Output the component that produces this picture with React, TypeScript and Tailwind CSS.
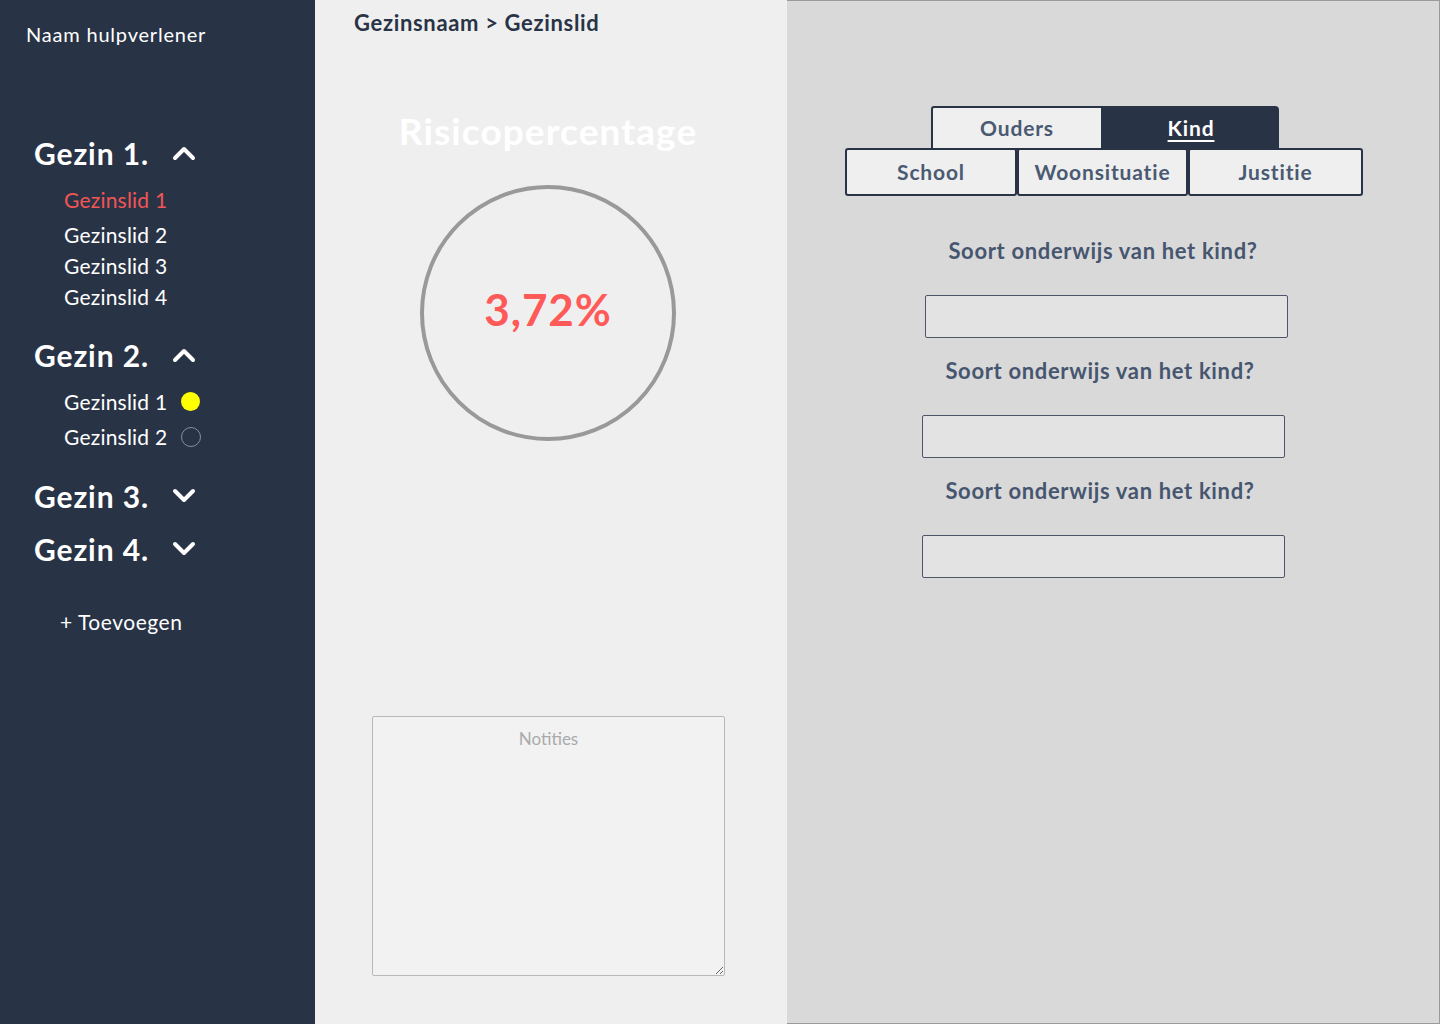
import React from "react";

const font = { fontFamily: "Lato, 'Open Sans', sans-serif" };

function Chevron({ up }: { up?: boolean }) {
  return (
    <svg width="24" height="16" viewBox="0 0 24 16">
      <path
        d={up ? "M3 13 L12 4 L21 13" : "M3 3 L12 12 L21 3"}
        fill="none"
        stroke="white"
        strokeWidth="4"
        strokeLinecap="round"
        strokeLinejoin="round"
      />
    </svg>
  );
}

type Member = { name: string; active?: boolean; dot?: "filled" | "empty" };

function Family({ title, open, members }: { title: string; open?: boolean; members?: Member[] }) {
  return (
    <div className="flex flex-col">
      <div className="flex items-center h-[36px]">
        <span className="w-[138px] text-[30px] font-bold text-white leading-[36px] tracking-[0.03em]">{title}</span>
        <Chevron up={open} />
      </div>
      {open && members && (
        <ul className="flex flex-col pl-[30px] mt-[13px]">
          {members.map((m, i) => (
            <li
              key={m.name}
              className={
                "flex items-center text-[21px] leading-[31px] tracking-[0.01em] " +
                (m.active ? "text-[#f25555]" : "text-white") +
                (i === 0 ? " mb-[4px]" : "")
              }
            >
              <span className={m.dot ? "w-[117px]" : ""}>{m.name}</span>
              {m.dot === "filled" && <span className="size-[19px] rounded-full bg-[#ffff00]" />}
              {m.dot === "empty" && <span className="size-[20px] rounded-full border border-[#8a8f99]" />}
            </li>
          ))}
        </ul>
      )}
    </div>
  );
}

function Sidebar() {
  return (
    <aside className="w-[315px] shrink-0 bg-[#293346] flex flex-col">
      <div className="pl-[26px] pt-[22px] text-[20px] leading-[24px] text-white tracking-[0.04em]">
        Naam hulpverlener
      </div>
      <div className="pl-[34px] flex flex-col">
        <div className="mt-[89px]">
          <Family
            title="Gezin 1."
            open
            members={[
              { name: "Gezinslid 1", active: true },
              { name: "Gezinslid 2" },
              { name: "Gezinslid 3" },
              { name: "Gezinslid 4" },
            ]}
          />
        </div>
        <div className="mt-[25px]">
          <Family
            title="Gezin 2."
            open
            members={[
              { name: "Gezinslid 1", dot: "filled" },
              { name: "Gezinslid 2", dot: "empty" },
            ]}
          />
        </div>
        <div className="mt-[26px]">
          <Family title="Gezin 3." />
        </div>
        <div className="mt-[17px]">
          <Family title="Gezin 4." />
        </div>
        <div className="mt-[41px] pl-[26px] text-[21px] leading-[28px] text-white tracking-[0.025em]">
          + Toevoegen
        </div>
      </div>
    </aside>
  );
}

function RiskPanel() {
  return (
    <section className="w-[472px] shrink-0 bg-[#efefef] flex flex-col">
      <div className="pl-[39px] pt-[9px] text-[22px] leading-[27px] font-bold text-[#293346] tracking-[0.03em]">
        Gezinsnaam &gt; Gezinslid
      </div>
      <h2 className="mt-[73px] text-center text-[37px] leading-[44px] font-bold text-white pr-[6px] tracking-[0.03em]">
        Risicopercentage
      </h2>
      <div className="mt-[32px] flex justify-center pr-[6px]">
        <div className="size-[256px] rounded-full border-[4px] border-[#999999] flex items-center justify-center">
          <span className="text-[44px] font-bold text-[#ff5a5a] leading-none tracking-[0.02em] pb-[8px]">3,72%</span>
        </div>
      </div>
      <div className="mt-[275px] pl-[57px]">
        <textarea
          placeholder="Notities"
          className="w-[353px] h-[260px] block bg-[#f2f2f2] border border-[#b8b8b8] rounded-[2px] pt-[9px] text-center text-[17px] text-[#999] placeholder:text-[#aaaaaa] outline-none"
          style={font}
        />
      </div>
    </section>
  );
}

function Tab({ label, active, className }: { label: string; active?: boolean; className: string }) {
  return (
    <div
      className={
        "flex items-center justify-center text-[21px] font-bold tracking-[0.04em] border-2 border-[#293346] " +
        (active
          ? "bg-[#293346] text-white underline underline-offset-[4px] decoration-2 "
          : "bg-[#efefef] text-[#4a5a72] ") +
        className
      }
    >
      {label}
    </div>
  );
}

function Question() {
  return (
    <div className="flex flex-col items-center">
      <div className="text-[22px] leading-[24px] font-bold text-[#47566f] tracking-[0.03em] pr-[6px]">
        Soort onderwijs van het kind?
      </div>
      <input className="mt-[32px] w-[363px] h-[43px] bg-[#e3e3e3] border border-[#4d5566] rounded-[2px] outline-none" />
    </div>
  );
}

function FormPanel() {
  return (
    <section className="flex-1 bg-[#d9d9d9] border-t border-r border-b border-[#9a9a9a] pt-[105px] flex flex-col">
      <div className="pl-[58px] flex flex-col">
        <div className="flex ml-[86px]">
          <Tab label="Ouders" className="w-[172px] h-[44px] rounded-tl-[3px]" />
          <Tab label="Kind" active className="w-[176px] h-[44px] rounded-tr-[4px]" />
        </div>
        <div className="flex -mt-[2px]">
          <Tab label="School" className="w-[172px] h-[48px] rounded-[3px]" />
          <Tab label="Woonsituatie" className="w-[171px] h-[48px] rounded-[3px]" />
          <Tab label="Justitie" className="w-[175px] h-[48px] rounded-[3px]" />
        </div>
      </div>
      <div className="mt-[43px] w-[632px] flex flex-col gap-[21px]">
        <div className="ml-[6px]">
          <Question />
        </div>
        <div>
          <Question />
        </div>
        <div>
          <Question />
        </div>
      </div>
    </section>
  );
}

export default function App() {
  return (
    <div className="flex w-[1440px] h-[1024px] overflow-hidden" style={font}>
      <Sidebar />
      <RiskPanel />
      <FormPanel />
    </div>
  );
}
